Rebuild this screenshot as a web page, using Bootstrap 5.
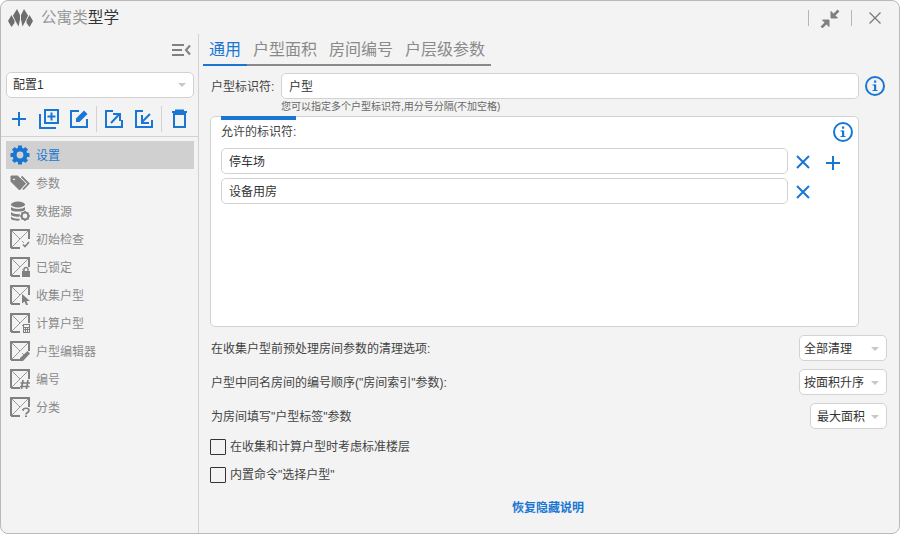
<!DOCTYPE html>
<html lang="zh-CN">
<head>
<meta charset="utf-8">
<title>公寓类型学</title>
<link rel="stylesheet" href="https://cdn.jsdelivr.net/npm/bootstrap@5.3.0/dist/css/bootstrap.min.css">
<style>
html,body{width:900px;height:534px;overflow:hidden;background:#fff;margin:0}
body{font-family:"Liberation Sans","Noto Sans CJK SC",sans-serif;font-size:12px;color:#444;line-height:18px}
.app-win{width:900px;height:534px;background:#f3f3f3;border:1px solid #b9b9b9;border-radius:8px;overflow:hidden}
.title-bar{height:33px;padding-left:7px;flex:none}
.logo-mark{width:25px;height:20px;margin-right:8px}
.title-text{font-size:15.6px;color:#999}
.title-text b{font-weight:400;color:#333}
.win-sep{width:1px;height:16px;background:#b5b5b5}
.win-btn{width:20px;height:20px;margin:0 11px}
.win-btn.last{margin:0 14px 0 13px}
.side-pane{width:198px;flex:none;border-right:1px solid #d2d2d2}
.toggle-row{height:38px;padding:9px 7px 0 0}
.side-input{margin:0 4px 0 5px}
.fake-select{height:26px;background:#fff;border:1px solid #d2d2d2;border-radius:5px;padding:0 7px 0 6px;font-size:12px;color:#333}
.fake-select::after{content:"";width:0;height:0;border-left:4px solid transparent;border-right:4px solid transparent;border-top:4px solid #c8c8c8;margin-left:auto;flex:none}
.tool-row{height:39px;padding:8px 0 0 5px;border-bottom:1px solid #d2d2d2}
.tool-btn{width:30px;height:24px;flex:none}
.tool-sep{width:1px;height:26px;background:#d2d2d2;flex:none}
.sep-shift{margin-left:4px}
.side-list{margin:4px 4px 0 5px}
.side-item{height:28px;padding-left:4px;color:#8a8a8a;font-size:12px;gap:6px}
.side-item svg{flex:none}
.side-item span{padding-top:2px}
.side-item.on{background:#d0d0d0;color:#1976d2}
.main-pane{min-width:0}
.tab-strip{height:32px;margin:0 0 7px 4px}
.tab-cell{font-size:16px;padding:1px 6px 0;color:#8a8a8a;height:32px;border-bottom:2px solid #8a8a8a;line-height:30px}
.tab-cell.on{color:#1976d2;border-bottom-color:#1976d2}
.id-row{padding-left:12px}
.id-label{width:70px;flex:none;padding-top:2px}
.plain-input{height:26px;background:#fff;border:1px solid #d2d2d2;border-radius:5px;padding:2px 7px 0;color:#333;font-size:12px}
.id-row .plain-input{width:578px;flex:none;margin-right:6px}
.hint-text{font-size:10px;line-height:14px;color:#666;margin-left:82px;height:17px;padding-top:1px}
.ids-box{width:649px;height:211px;margin-left:11px;background:#fff;border:1px solid #d2d2d2;border-radius:5px;padding:0 0 0 10px}
.top-bar{width:75px;height:4px;background:#1976d2;margin-top:-1px}
.box-head{height:28px;padding:0 5px 4px 0}
.rule-row{margin-bottom:4px}
.rule-row .plain-input{width:567px;flex:none}
.cross-mark{margin:2px 0 0 8px}
.plus-after{margin:4px 0 0 15px}
.opt-row{height:26px;padding:0 12px;margin-bottom:8px}
.opt-row>span{padding-top:2px}
.opt-row .fake-select{flex:none;padding:2px 7px 0 4px}
.opt-row .sel-narrow{padding-left:6px}
.sel-wide{width:88px}
.sel-narrow{width:77px}
.opts{margin:8px 0 10px}
.chk-row{height:16px;margin:0 0 12px 11px;gap:4px}
.chk-box{width:16px;height:16px;border:1px solid #333;flex:none;border-radius:1px}
.restore-link{color:#1976d2;font-weight:700;text-decoration:none;font-size:12px;line-height:18px;margin-top:4px}
.restore-wrap{width:698px}
</style>
</head>
<body>
<svg width="0" height="0" class="position-absolute">
  <defs>
    <symbol id="env" viewBox="0 0 20 20">
      <path d="M1 19V1H19V10M1 19H10" fill="none" stroke="#808080" stroke-width="2"/>
      <path d="M1.500 1.500L10 10M18.500 1.500L1.500 18.500M12 12L14 14" fill="none" stroke="#9a9a9a" stroke-width="1"/>
    </symbol>
    <symbol id="info" viewBox="0 0 20 20">
      <circle cx="10" cy="10" r="9" fill="none" stroke="#1976d2" stroke-width="2"/>
      <rect x="9" y="8.500" width="2.200" height="6.500" fill="#1976d2"/>
      <rect x="9" y="4.500" width="2.200" height="2.200" fill="#1976d2"/>
      <path d="M7.500 9H10M7.500 14.500H12.500" stroke="#1976d2"/>
    </symbol>
    <symbol id="cross" viewBox="0 0 14 14">
      <path d="M1 1L13 13M13 1L1 13" stroke="#1976d2" stroke-width="2" fill="none"/>
    </symbol>
    <symbol id="plus" viewBox="0 0 16 16">
      <path d="M8 1V15M1 8H15" stroke="#1976d2" stroke-width="2" fill="none"/>
    </symbol>
  </defs>
</svg>
<div class="app-win d-flex flex-column">
  <div class="title-bar d-flex align-items-center">
    <svg class="logo-mark" viewBox="0 0 25 20"><path d="M0 13L3.500 7L6.500 12.500L6.500 15L3.500 19ZM5 7.500L9 1L12 7V11.500L10.500 18.500L7.500 13ZM25 13L21.500 7L18.500 12.500V15L21.500 19ZM20 7.500L16 1L13 7V11.500L14.500 18.500L17.500 13Z" fill="#6e6e6e"/></svg>
    <span class="title-text">公寓类<b>型学</b></span>
    <span class="win-sep ms-auto"></span>
    <svg class="win-btn" viewBox="0 0 20 20"><path d="M11 3.500V10H17.500ZM9 12H2.500L9 18.500Z" fill="#808080" stroke="#808080"/><path d="M13 8L18.500 2.500M7 14L1.500 19.500" stroke="#808080" stroke-width="2.600" fill="none"/></svg>
    <span class="win-sep"></span>
    <svg class="win-btn last" viewBox="0 0 20 20"><path d="M4.500 4.500L15.500 15.500M15.500 4.500L4.500 15.500" fill="none" stroke="#777" stroke-width="1.200"/></svg>
  </div>
  <div class="d-flex flex-grow-1">
    <aside class="side-pane">
      <div class="toggle-row d-flex justify-content-end">
        <svg width="19" height="14" viewBox="0 0 19 14"><path d="M0 2H12M0 7H10M0 12H12M18 2.500L14 7L18 11.500" fill="none" stroke="#808080" stroke-width="2"/></svg>
      </div>
      <div class="fake-select side-input d-flex align-items-center">配置1</div>
      <div class="tool-row d-flex align-items-start">
        <svg class="tool-btn" viewBox="0 0 30 24"><path d="M13 6V20M6 13H20" stroke="#1976d2" stroke-width="2" fill="none"/></svg>
        <svg class="tool-btn" viewBox="0 0 30 24"><path d="M4 8V22H20M9 4H22V17H9ZM15.500 6.500V14.500M11.500 10.500H19.500" fill="none" stroke="#1976d2" stroke-width="2"/></svg>
        <svg class="tool-btn" viewBox="0 0 30 24"><path d="M13 5H5V21H21V13" fill="none" stroke="#1976d2" stroke-width="2"/><path d="M10 16V12.500L18 4.500L21.500 8L13.500 16Z" fill="#1976d2"/></svg>
        <span class="tool-sep"></span>
        <svg class="tool-btn" viewBox="0 0 30 24"><path d="M16 5H9V21H25V14" fill="none" stroke="#1976d2" stroke-width="2"/><path d="M14 17L22 8.500M16 8H23V15" fill="none" stroke="#1976d2" stroke-width="2"/></svg>
        <svg class="tool-btn" viewBox="0 0 30 24"><path d="M16 5H9V21H25V14" fill="none" stroke="#1976d2" stroke-width="2"/><path d="M23 8L15 16M15 9V17H22" fill="none" stroke="#1976d2" stroke-width="2"/></svg>
        <span class="tool-sep sep-shift"></span>
        <svg class="tool-btn" viewBox="0 0 30 24"><path d="M12 8H23V21H12ZM10 6H25" fill="none" stroke="#1976d2" stroke-width="2"/><rect x="13" y="3.500" width="9" height="2" fill="#1976d2"/></svg>
      </div>
      <div class="side-list d-flex flex-column">
        <div class="side-item on d-flex align-items-center">
          <svg width="20" height="20" viewBox="0 0 20 20"><circle cx="10" cy="10" r="5.400" fill="none" stroke="#1976d2" stroke-width="4"/><path d="M10 .5V19.500M.5 10H19.500M3.300 3.300L16.700 16.700M16.700 3.300L3.300 16.700" stroke="#1976d2" stroke-width="4" stroke-dasharray="4 11 4 0" fill="none"/></svg>
          <span>设置</span>
        </div>
        <div class="side-item d-flex align-items-center">
          <svg width="20" height="20" viewBox="0 0 20 20"><path fill-rule="evenodd" d="M1 3H7.500L15.500 10.500L9.500 17L1 8.500ZM4 5A1.400 1.400 0 1 0 4 7.800A1.400 1.400 0 1 0 4 5Z" fill="#808080" stroke="#808080" stroke-linejoin="round"/><path d="M11.500 3.500L18.500 10.500L13 16.500" fill="none" stroke="#808080" stroke-width="1.800"/></svg>
          <span>参数</span>
        </div>
        <div class="side-item d-flex align-items-center">
          <svg width="20" height="20" viewBox="0 0 20 20"><ellipse cx="8" cy="3.500" rx="7" ry="3" fill="#808080"/><path d="M1 6C3 8.500 13 8.500 15 6V9C13 11 3 11 1 9ZM1 11C3 13 8 13.500 10 13L9.500 15.500C6 16 3 15.500 1 14ZM1 15.500C3 17.500 6 18 9.500 17.500V19.500C5 20 1 19 1 17.500Z" fill="#808080"/><circle cx="15" cy="15" r="3.400" fill="none" stroke="#808080" stroke-width="2"/><path d="M15 10V12M15 18V20M10 15H12M18 15H20M11.500 11.500L13 13M17 17L18.500 18.500M18.500 11.500L17 13M13 17L11.500 18.500" stroke="#808080" stroke-width="1.600"/></svg>
          <span>数据源</span>
        </div>
        <div class="side-item d-flex align-items-center">
          <svg width="20" height="20" viewBox="0 0 20 20"><use href="#env"/><path d="M13 15.500L15 17.500L19 13" fill="none" stroke="#808080" stroke-width="1.600"/></svg>
          <span>初始检查</span>
        </div>
        <div class="side-item d-flex align-items-center">
          <svg width="20" height="20" viewBox="0 0 20 20"><use href="#env"/><rect x="12" y="14" width="8" height="6" fill="#808080"/><path d="M14 14V12.500A2 2 0 0 1 18 12.500V14" fill="none" stroke="#808080" stroke-width="1.400"/></svg>
          <span>已锁定</span>
        </div>
        <div class="side-item d-flex align-items-center">
          <svg width="20" height="20" viewBox="0 0 20 20"><use href="#env"/><path d="M12 9L20 16H16.500L18 20H16L14.500 16.500L12 18.500Z" fill="#808080"/></svg>
          <span>收集户型</span>
        </div>
        <div class="side-item d-flex align-items-center">
          <svg width="20" height="20" viewBox="0 0 20 20"><use href="#env"/><path fill-rule="evenodd" d="M13 11H20V20H13ZM14 12V14H19V12ZM14 15V16H15V15ZM16 15V16H17V15ZM18 15V16H19V15ZM14 17V19H15V17ZM16 17V19H17V17ZM18 17V19H19V17Z" fill="#808080"/></svg>
          <span>计算户型</span>
        </div>
        <div class="side-item d-flex align-items-center">
          <svg width="20" height="20" viewBox="0 0 20 20"><use href="#env"/><path d="M10 20V17L17.500 10L20 12.500L13 20Z" fill="#808080"/></svg>
          <span>户型编辑器</span>
        </div>
        <div class="side-item d-flex align-items-center">
          <svg width="20" height="20" viewBox="0 0 20 20"><use href="#env"/><path d="M13 11L11.500 20M18 11L16.500 20M10.500 14H20M10 17.500H19.500" fill="none" stroke="#808080" stroke-width="1.700"/></svg>
          <span>编号</span>
        </div>
        <div class="side-item d-flex align-items-center">
          <svg width="20" height="20" viewBox="0 0 20 20"><use href="#env"/><path d="M13 13.500C13 10.500 19 10.500 19 13.500C19 15.500 16 15.500 16 17.500" fill="none" stroke="#808080" stroke-width="1.700"/><rect x="15" y="18.500" width="2" height="1.500" fill="#808080"/></svg>
          <span>分类</span>
        </div>
      </div>
    </aside>
    <main class="main-pane flex-grow-1">
      <div class="tab-strip d-flex">
        <div class="tab-cell on">通用</div>
        <div class="tab-cell">户型面积</div>
        <div class="tab-cell">房间编号</div>
        <div class="tab-cell">户层级参数</div>
      </div>
      <div class="id-row d-flex align-items-center">
        <span class="id-label">户型标识符:</span>
        <div class="plain-input d-flex align-items-center">户型</div>
        <svg width="20" height="20"><use href="#info"/></svg>
      </div>
      <div class="hint-text">您可以指定多个户型标识符,用分号分隔(不加空格)</div>
      <section class="ids-box">
        <div class="top-bar"></div>
        <div class="box-head d-flex align-items-center justify-content-between">
          <span>允许的标识符:</span>
          <svg width="20" height="20"><use href="#info"/></svg>
        </div>
        <div class="rule-row d-flex align-items-center">
          <div class="plain-input d-flex align-items-center">停车场</div>
          <svg class="cross-mark" width="14" height="14"><use href="#cross"/></svg>
          <svg class="plus-after" width="16" height="16"><use href="#plus"/></svg>
        </div>
        <div class="rule-row d-flex align-items-center">
          <div class="plain-input d-flex align-items-center">设备用房</div>
          <svg class="cross-mark" width="14" height="14"><use href="#cross"/></svg>
        </div>
      </section>
      <div class="opts">
        <div class="opt-row d-flex align-items-center justify-content-between">
          <span>在收集户型前预处理房间参数的清理选项:</span>
          <div class="fake-select sel-wide d-flex align-items-center">全部清理</div>
        </div>
        <div class="opt-row d-flex align-items-center justify-content-between">
          <span>户型中同名房间的编号顺序("房间索引"参数):</span>
          <div class="fake-select sel-wide d-flex align-items-center">按面积升序</div>
        </div>
        <div class="opt-row d-flex align-items-center justify-content-between">
          <span>为房间填写"户型标签"参数</span>
          <div class="fake-select sel-narrow d-flex align-items-center">最大面积</div>
        </div>
      </div>
      <div class="chk-row d-flex align-items-center"><span class="chk-box"></span><span>在收集和计算户型时考虑标准楼层</span></div>
      <div class="chk-row d-flex align-items-center"><span class="chk-box"></span><span>内置命令"选择户型"</span></div>
      <div class="restore-wrap d-flex justify-content-center"><a class="restore-link" href="#">恢复隐藏说明</a></div>
    </main>
  </div>
</div>
</body>
</html>
